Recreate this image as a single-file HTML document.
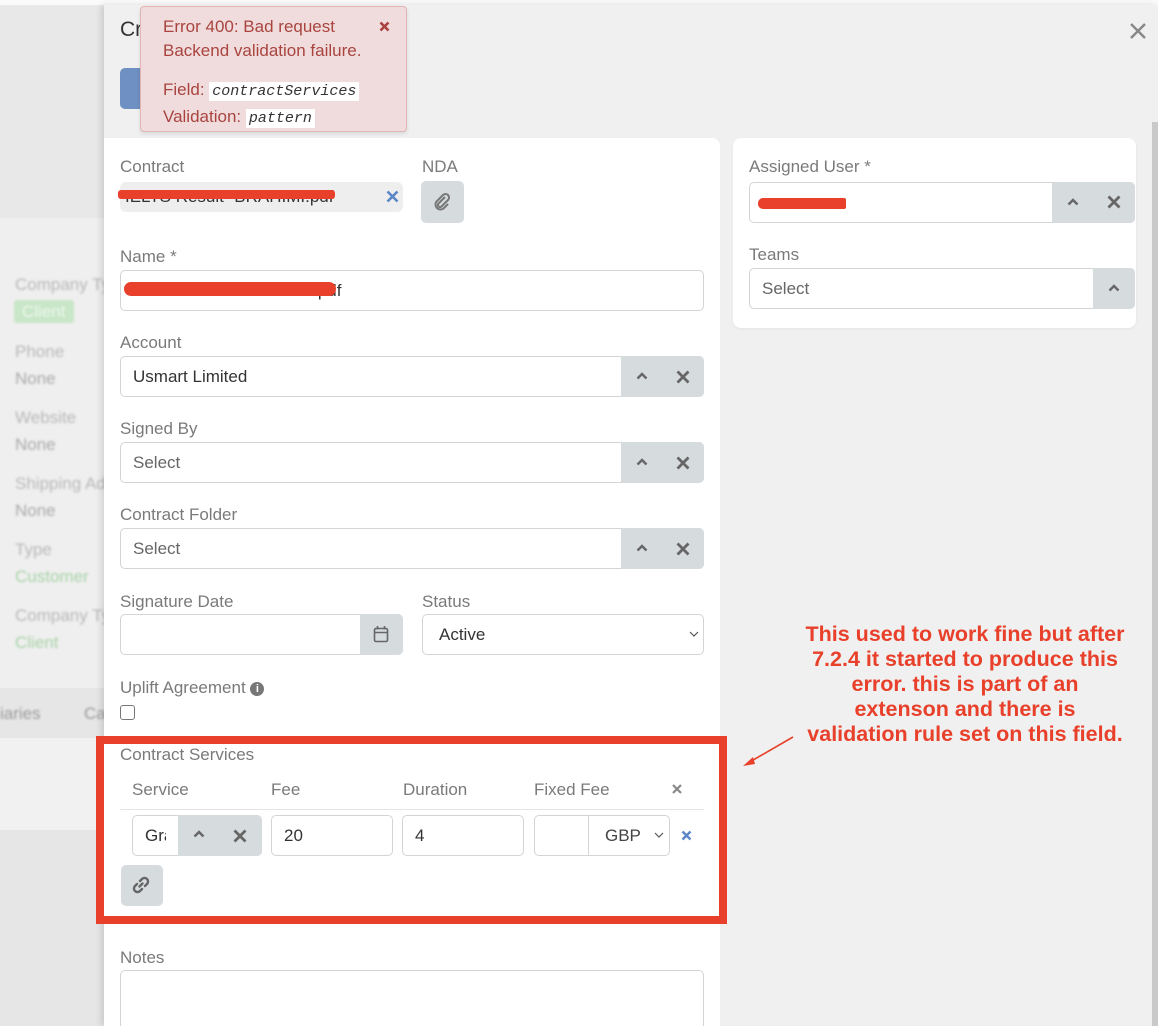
<!DOCTYPE html>
<html style="width:1158px;height:1026px;overflow:hidden"><head><meta charset="utf-8">
<style>
*{box-sizing:border-box;margin:0;padding:0}
body{width:1158px;height:1026px;overflow:hidden;position:relative;background:#f0f0f0;font-family:"Liberation Sans",sans-serif;font-size:17px;color:#333}
.a{position:absolute}
.lbl{position:absolute;color:#7a7a7a;font-size:17px;line-height:20px}
.inp{position:absolute;background:#fff;border:1px solid #d4d4d4;border-radius:5px;height:41px;line-height:39px;padding-left:12px;color:#333;font-size:17px}
.gbtn{position:absolute;background:#d6dbde;}
.bg{color:#b9b9b9;font-size:17px;position:absolute;filter:blur(1px)}
.bgg{color:#a8d3a8;}
svg{display:block}
</style></head><body>
<div class="a" style="left:0;top:0;width:1158px;height:5px;background:#fafafa"></div>
<div class="a" style="left:0;top:5px;width:104px;height:213px;background:#e8e8e8"></div>
<div class="a" style="left:0;top:218px;width:104px;height:470px;background:#efefef"></div>
<div class="a" style="left:0;top:688px;width:104px;height:50px;background:#e6e6e6"></div>
<div class="a" style="left:0;top:738px;width:104px;height:92px;background:#f1f1f1"></div>
<div class="a" style="left:0;top:830px;width:104px;height:196px;background:#e6e6e6"></div>
<div class="bg" style="left:15px;top:275px">Company Ty</div>
<div class="a" style="left:14px;top:300px;width:60px;height:23px;background:#c8e6c8;border-radius:3px;filter:blur(1px)"></div>
<div class="bg" style="left:22px;top:302px;color:#eef8ee">Client</div>
<div class="bg" style="left:15px;top:342px">Phone</div>
<div class="bg" style="left:15px;top:369px;color:#aaa">None</div>
<div class="bg" style="left:15px;top:408px">Website</div>
<div class="bg" style="left:15px;top:435px;color:#aaa">None</div>
<div class="bg" style="left:15px;top:474px">Shipping Ad</div>
<div class="bg" style="left:15px;top:501px;color:#aaa">None</div>
<div class="bg" style="left:15px;top:540px">Type</div>
<div class="bg bgg" style="left:15px;top:567px">Customer</div>
<div class="bg" style="left:15px;top:606px">Company Ty</div>
<div class="bg bgg" style="left:15px;top:633px">Client</div>
<div class="bg" style="left:0;top:704px;color:#9a9a9a">iaries</div>
<div class="bg" style="left:84px;top:704px;color:#9a9a9a">Ca</div>

<div class="a" style="left:104px;top:5px;width:1054px;height:1021px;background:#f0f0f0;box-shadow:-3px 0 6px rgba(0,0,0,.12)"></div>
<div class="a" style="left:120px;top:18px;font-size:21px;color:#333">Cr</div>
<div class="a" style="left:120px;top:68px;width:30px;height:41px;background:#6e90c2;border-radius:5px"></div>
<svg class="a" style="left:1129px;top:22px" width="18" height="18"><path d="M2 2L16 16M16 2L2 16" stroke="#888" stroke-width="2.4"/></svg>
<div class="a" style="left:1152px;top:122px;width:6px;height:904px;background:#c9c9c9"></div>

<div class="a" style="left:104px;top:138px;width:616px;height:888px;background:#fff;border-radius:0 8px 0 0"></div>
<div class="lbl" style="left:120px;top:157px">Contract</div>
<div class="a" style="left:120px;top:182px;width:283px;height:30px;background:#eee;border-radius:6px;overflow:hidden;color:#333;line-height:30px;padding-left:5px;white-space:nowrap">IELTS Result- BRAHIMI.pdf</div>
<div class="a" style="left:118px;top:190px;width:217px;height:9px;background:#e8402a;border-radius:3px"></div>
<svg class="a" style="left:386px;top:190px" width="13" height="13"><path d="M1.5 1.5L11.5 11.5M11.5 1.5L1.5 11.5" stroke="#5b86c7" stroke-width="2.6"/></svg>
<div class="lbl" style="left:422px;top:157px">NDA</div>
<div class="gbtn" style="left:421px;top:181px;width:43px;height:42px;border-radius:5px"></div>
<svg class="a" style="left:432px;top:192px" width="20" height="20" viewBox="0 0 20 20"><path d="M13 5L6.5 11.5a2 2 0 0 0 3 3L16 8a3.5 3.5 0 0 0-5-5L4.5 9.5a5 5 0 0 0 7 7L16 12" fill="none" stroke="#777" stroke-width="2"/></svg>

<div class="lbl" style="left:120px;top:247px">Name *</div>
<div class="inp" style="left:120px;top:270px;width:584px">IELTS Result- BRAHIMI.pdf</div>
<div class="a" style="left:124px;top:282px;width:212px;height:14px;background:#e8402a;border-radius:7px"></div>

<div class="lbl" style="left:120px;top:333px">Account</div>
<div class="inp" style="left:120px;top:356px;width:584px">Usmart Limited</div>
<div class="gbtn" style="left:621px;top:356px;width:83px;height:41px;border-radius:0 5px 5px 0"></div>

<div class="lbl" style="left:120px;top:419px">Signed By</div>
<div class="inp" style="left:120px;top:442px;width:584px;color:#666">Select</div>
<div class="gbtn" style="left:621px;top:442px;width:83px;height:41px;border-radius:0 5px 5px 0"></div>

<div class="lbl" style="left:120px;top:505px">Contract Folder</div>
<div class="inp" style="left:120px;top:528px;width:584px;color:#666">Select</div>
<div class="gbtn" style="left:621px;top:528px;width:83px;height:41px;border-radius:0 5px 5px 0"></div>

<div class="lbl" style="left:120px;top:592px">Signature Date</div>
<div class="inp" style="left:120px;top:614px;width:283px"></div>
<div class="gbtn" style="left:360px;top:614px;width:43px;height:41px;border-radius:0 5px 5px 0"></div>
<svg class="a" style="left:373px;top:625px" width="16" height="18"><rect x="1.5" y="3.5" width="13" height="13" rx="1.5" fill="none" stroke="#666" stroke-width="1.6"/><path d="M1.5 7.5H14.5M4.5 1V4.5M11.5 1V4.5" stroke="#666" stroke-width="1.6"/></svg>
<div class="lbl" style="left:422px;top:592px">Status</div>
<div class="inp" style="left:422px;top:614px;width:282px;padding-left:16px">Active</div>
<svg class="a" style="left:689px;top:631px" width="10" height="7"><path d="M1 1L5 5L9 1" fill="none" stroke="#555" stroke-width="1.2"/></svg>

<div class="lbl" style="left:120px;top:678px">Uplift Agreement <span style="display:inline-block;width:14px;height:14px;border-radius:50%;background:#777;color:#fff;font-size:11px;font-weight:bold;text-align:center;line-height:14px;vertical-align:1px">i</span></div>
<div class="a" style="left:120px;top:705px;width:15px;height:15px;border:1.5px solid #777;border-radius:3px"></div>

<div class="lbl" style="left:120px;top:745px">Contract Services</div>
<div class="lbl" style="left:132px;top:780px">Service</div>
<div class="lbl" style="left:271px;top:780px">Fee</div>
<div class="lbl" style="left:403px;top:780px">Duration</div>
<div class="lbl" style="left:534px;top:780px">Fixed Fee</div>
<svg class="a" style="left:672px;top:784px" width="10" height="10"><path d="M1 1L9 9M9 1L1 9" stroke="#888" stroke-width="2.2"/></svg>
<div class="a" style="left:120px;top:809px;width:584px;height:1px;background:#e4e4e4"></div>
<div class="inp" style="left:132px;top:815px;width:130px"></div>
<div class="a" style="left:145px;top:815px;width:21px;overflow:hidden;line-height:41px;white-space:nowrap">Gra</div>
<div class="gbtn" style="left:178px;top:815px;width:84px;height:41px;border-radius:0 5px 5px 0"></div>
<svg class="a" style="left:193px;top:830px" width="12" height="8"><path d="M1.5 6.5L6 2L10.5 6.5" fill="none" stroke="#666" stroke-width="2.4"/></svg>
<svg class="a" style="left:233px;top:829px" width="14" height="14"><path d="M1.5 1.5L12.5 12.5M12.5 1.5L1.5 12.5" stroke="#666" stroke-width="2.8"/></svg>
<div class="inp" style="left:271px;top:815px;width:122px">20</div>
<div class="inp" style="left:402px;top:815px;width:122px">4</div>
<div class="inp" style="left:534px;top:815px;width:136px"></div>
<div class="a" style="left:588px;top:816px;width:1px;height:39px;background:#d4d4d4"></div>
<div class="a" style="left:605px;top:815px;line-height:41px;color:#444">GBP</div>
<svg class="a" style="left:654px;top:832px" width="10" height="7"><path d="M1 1L5 5L9 1" fill="none" stroke="#555" stroke-width="1.2"/></svg>
<svg class="a" style="left:681px;top:830px" width="11" height="11"><path d="M1.5 1.5L9.5 9.5M9.5 1.5L1.5 9.5" stroke="#5b86c7" stroke-width="2.4"/></svg>
<div class="gbtn" style="left:121px;top:865px;width:42px;height:41px;border-radius:5px"></div>
<svg class="a" style="left:131px;top:875px" width="20" height="20" viewBox="0 0 20 20"><path d="M8.5 11.5L11.5 8.5M9 6l2-2a3 3 0 0 1 5 5l-2 2M11 14l-2 2a3 3 0 0 1-5-5l2-2" fill="none" stroke="#666" stroke-width="2.4" stroke-linecap="round"/></svg>
<div class="a" style="left:96px;top:736px;width:631px;height:188px;border:8px solid #e8402a"></div>

<div class="lbl" style="left:120px;top:948px">Notes</div>
<div class="a" style="left:120px;top:970px;width:584px;height:56px;border:1px solid #d4d4d4;border-bottom:none;border-radius:5px 5px 0 0;background:#fff"></div>

<svg class="a" style="left:636px;top:372px" width="12" height="8"><path d="M1.5 6.5L6 2L10.5 6.5" fill="none" stroke="#666" stroke-width="2.4"/></svg>
<svg class="a" style="left:676px;top:370px" width="14" height="14"><path d="M1.5 1.5L12.5 12.5M12.5 1.5L1.5 12.5" stroke="#666" stroke-width="2.8"/></svg>
<svg class="a" style="left:636px;top:458px" width="12" height="8"><path d="M1.5 6.5L6 2L10.5 6.5" fill="none" stroke="#666" stroke-width="2.4"/></svg>
<svg class="a" style="left:676px;top:456px" width="14" height="14"><path d="M1.5 1.5L12.5 12.5M12.5 1.5L1.5 12.5" stroke="#666" stroke-width="2.8"/></svg>
<svg class="a" style="left:636px;top:544px" width="12" height="8"><path d="M1.5 6.5L6 2L10.5 6.5" fill="none" stroke="#666" stroke-width="2.4"/></svg>
<svg class="a" style="left:676px;top:542px" width="14" height="14"><path d="M1.5 1.5L12.5 12.5M12.5 1.5L1.5 12.5" stroke="#666" stroke-width="2.8"/></svg>

<div class="a" style="left:733px;top:138px;width:403px;height:190px;background:#fff;border-radius:8px;box-shadow:0 1px 3px rgba(0,0,0,.05)"></div>
<div class="lbl" style="left:749px;top:157px">Assigned User *</div>
<div class="inp" style="left:749px;top:182px;width:386px"></div>
<div class="gbtn" style="left:1052px;top:182px;width:83px;height:41px;border-radius:0 5px 5px 0"></div>
<div class="a" style="left:758px;top:198px;width:88px;height:11px;background:#e8402a;border-radius:5px 2px 2px 5px"></div>
<svg class="a" style="left:1067px;top:198px" width="12" height="8"><path d="M1.5 6.5L6 2L10.5 6.5" fill="none" stroke="#666" stroke-width="2.4"/></svg>
<svg class="a" style="left:1107px;top:195px" width="14" height="14"><path d="M1.5 1.5L12.5 12.5M12.5 1.5L1.5 12.5" stroke="#666" stroke-width="2.8"/></svg>
<div class="lbl" style="left:749px;top:245px">Teams</div>
<div class="inp" style="left:749px;top:268px;width:386px;color:#666">Select</div>
<div class="gbtn" style="left:1093px;top:268px;width:42px;height:41px;border-radius:0 5px 5px 0"></div>
<svg class="a" style="left:1108px;top:284px" width="12" height="8"><path d="M1.5 6.5L6 2L10.5 6.5" fill="none" stroke="#666" stroke-width="2.4"/></svg>

<div class="a" style="left:140px;top:6px;width:267px;height:126px;background:#f0dcdc;border:1px solid #e2b5b5;border-radius:4px;box-shadow:0 2px 4px rgba(0,0,0,.1);color:#a9443f;padding:8px 0 0 22px;line-height:24px;font-size:17px;white-space:nowrap">
Error 400: Bad request<br>Backend validation failure.
<div style="margin-top:14px;line-height:25px">Field: <span style="background:#fff;font-family:'Liberation Mono',monospace;font-style:italic;font-size:15px;color:#333;padding:1px 3px">contractServices</span><br>Validation: <span style="background:#fff;font-family:'Liberation Mono',monospace;font-style:italic;font-size:15px;color:#333;padding:1px 3px">pattern</span></div>
</div>
<svg class="a" style="left:379px;top:21px" width="11" height="11"><path d="M1.5 1.5L9.5 9.5M9.5 1.5L1.5 9.5" stroke="#a9443f" stroke-width="2.6"/></svg>

<div class="a" style="left:765px;top:622px;width:400px;text-align:center;color:#e8402a;font-weight:bold;font-size:21.5px;line-height:25px;white-space:nowrap">This used to work fine but after<br>7.2.4 it started to produce this<br>error. this is part of an<br>extenson and there is<br>validation rule set on this field.</div>
<svg class="a" style="left:740px;top:735px" width="60" height="35"><path d="M53 2L8 28" stroke="#e8402a" stroke-width="1.6"/><path d="M3 31L13 22L15 29Z" fill="#e8402a"/></svg>
</body></html>
